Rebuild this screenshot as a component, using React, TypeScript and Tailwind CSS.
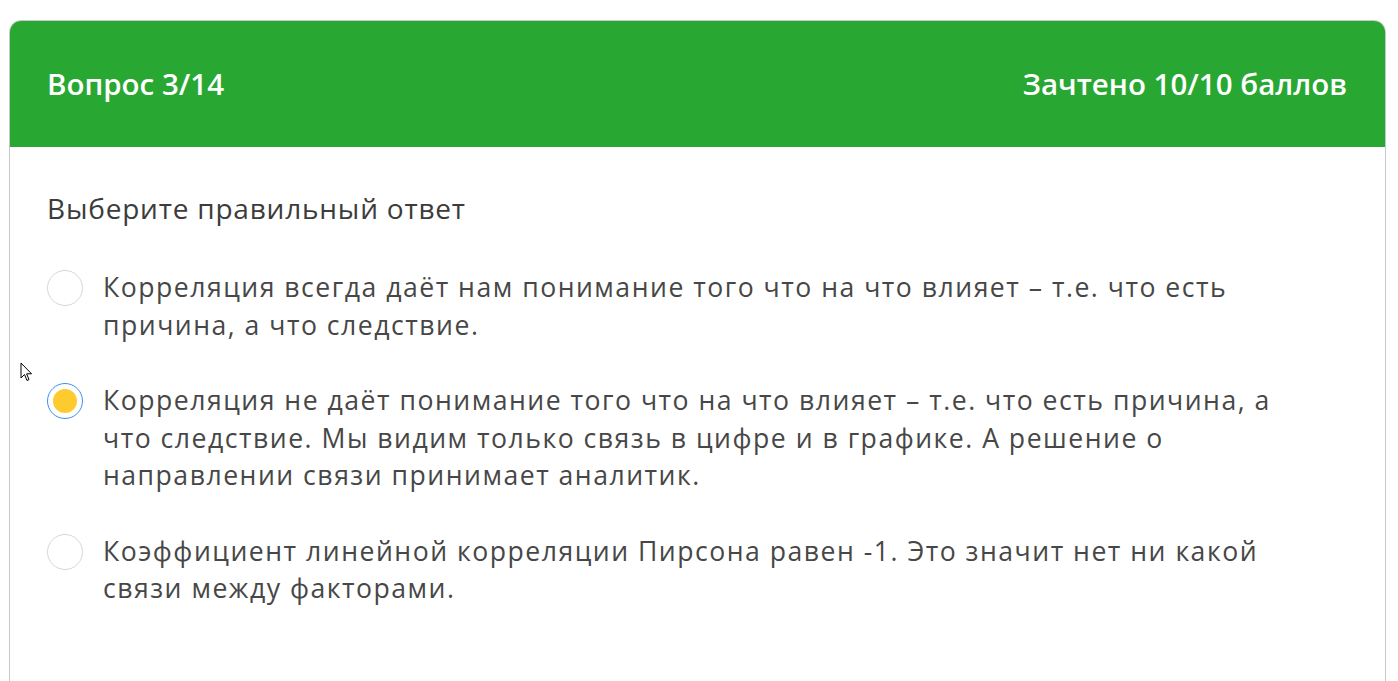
import React from "react";

const options = [
  {
    text: "Корреляция всегда даёт нам понимание того что на что влияет – т.е. что есть причина, а что следствие.",
    checked: false,
  },
  {
    text: "Корреляция не даёт понимание того что на что влияет – т.е. что есть причина, а что следствие. Мы видим только связь в цифре и в графике. А решение о направлении связи принимает аналитик.",
    checked: true,
  },
  {
    text: "Коэффициент линейной корреляции Пирсона равен -1. Это значит нет ни какой связи между факторами.",
    checked: false,
  },
];

const Radio = ({ checked }: { checked: boolean }) =>
  checked ? (
    <span className="flex size-[36px] shrink-0 items-center justify-center rounded-full border border-[#3b8ff0] bg-white">
      <span className="size-[24px] rounded-full bg-[#fecb2f]" />
    </span>
  ) : (
    <span className="size-[36px] shrink-0 rounded-full border border-[#d6d6dc] bg-white" />
  );

export default function App() {
  return (
    <div className="relative h-[681px] overflow-hidden bg-white pl-[9px] pr-[12px] pt-[20px] font-['Open_Sans',sans-serif]">
      <div className="h-[700px] overflow-hidden rounded-t-[12px] border border-[#c8c8c8]">
        <div className="flex h-[126px] items-center justify-between bg-[#29a733] pl-[37px] pr-[38px] text-[29.5px] font-semibold text-white">
          <span>Вопрос 3/14</span>
          <span>Зачтено 10/10 баллов</span>
        </div>

        <div className="px-[37px] pt-[45px]">
          <p className="text-[28px] leading-[32px] tracking-[0.8px] text-[#3c3c3c]">Выберите правильный ответ</p>

          <div className="mt-[46px] flex flex-col gap-[39px]">
            {options.map((o, i) => (
              <label key={i} className="flex items-start gap-[20px]">
                <Radio checked={o.checked} />
                <span className="-mt-[1px] max-w-[1195px] text-[26.6px] leading-[37.5px] tracking-[1.5px] text-[#474747]">
                  {o.text}
                </span>
              </label>
            ))}
          </div>
        </div>
      </div>

      {/* mouse cursor */}
      <svg className="absolute left-[20px] top-[362px]" width="13" height="20" viewBox="0 0 13 20">
        <path d="M1 1 L1 16 L4.5 12.5 L7 18.5 L9 17.6 L6.6 11.8 L11.5 11.8 Z" fill="white" stroke="black" strokeWidth="1" strokeLinejoin="round" />
      </svg>
    </div>
  );
}
